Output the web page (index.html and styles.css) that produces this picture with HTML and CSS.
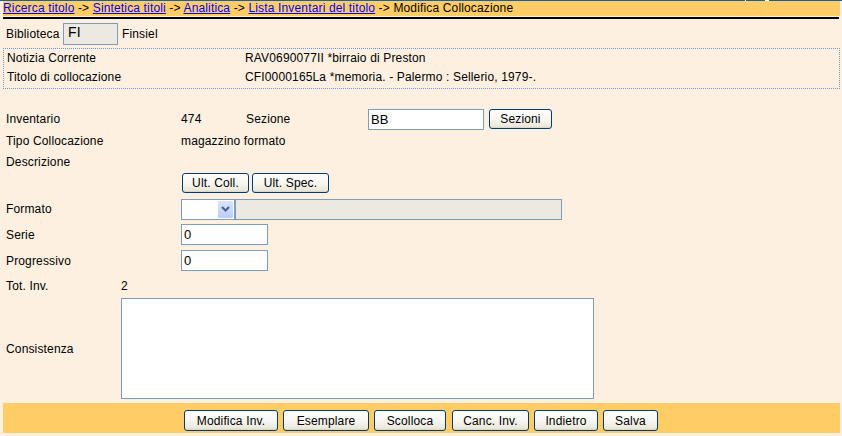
FILE: index.html
```html
<!DOCTYPE html>
<html lang="it">
<head>
<meta charset="utf-8">
<title>Modifica Collocazione</title>
<link rel="stylesheet" href="styles.css">
</head>
<body>
<div class="topline"></div>
<div class="page">
  <div class="crumbs"><a href="#">Ricerca titolo</a> -&gt; <a href="#">Sintetica titoli</a> -&gt; <a href="#">Analitica</a> -&gt; <a href="#">Lista Inventari del titolo</a> -&gt; Modifica Collocazione</div>
  <div class="rule"></div>

  <div class="bib-row">
    <span class="bib-label">Biblioteca</span>
    <span class="field field-grey bib-field">FI</span>
    <span class="bib-name">Finsiel</span>
  </div>

  <div class="infobox">
    <div class="info-row"><span class="info-label">Notizia Corrente</span><span>RAV0690077II *birraio di Preston</span></div>
    <div class="info-row"><span class="info-label">Titolo di collocazione</span><span>CFI0000165La *memoria. - Palermo : Sellerio, 1979-.</span></div>
  </div>

  <div class="form">
    <div class="row row-inv">
      <span class="label">Inventario</span>
      <span class="num">474</span>
      <span class="sez-label">Sezione</span>
      <span class="field sez-field">BB</span>
      <button class="btn btn-sez" type="button">Sezioni</button>
    </div>
    <div class="row row-tipo">
      <span class="label">Tipo Collocazione</span>
      <span>magazzino formato</span>
    </div>
    <div class="row row-desc">
      <span class="label">Descrizione</span>
    </div>
    <div class="row row-ult">
      <span class="label"></span>
      <button class="btn btn-coll" type="button">Ult. Coll.</button>
      <button class="btn btn-spec" type="button">Ult. Spec.</button>
    </div>
    <div class="row row-formato">
      <span class="label">Formato</span>
      <span class="select">
        <span class="select-arrow"><svg width="9" height="6" viewBox="0 0 9 6"><path d="M1 1 L4.5 4.5 L8 1" fill="none" stroke="#4d6185" stroke-width="2"/></svg></span>
      </span>
      <span class="field field-grey formato-field"></span>
    </div>
    <div class="row row-serie">
      <span class="label">Serie</span>
      <span class="field small-field">0</span>
    </div>
    <div class="row row-prog">
      <span class="label">Progressivo</span>
      <span class="field small-field">0</span>
    </div>
    <div class="row row-tot">
      <span class="label label-short">Tot. Inv.</span>
      <span>2</span>
    </div>
    <div class="row row-cons">
      <span class="label label-short">Consistenza</span>
      <span class="field textarea"></span>
    </div>
  </div>

  <div class="footer">
    <button class="btn b-mod" type="button">Modifica Inv.</button>
    <button class="btn b-ese" type="button">Esemplare</button>
    <button class="btn b-sco" type="button">Scolloca</button>
    <button class="btn b-can" type="button">Canc. Inv.</button>
    <button class="btn b-ind" type="button">Indietro</button>
    <button class="btn b-sal" type="button">Salva</button>
  </div>
</div>
</body>
</html>
```

FILE: styles.css
```css
* { box-sizing: border-box; }

html, body {
  margin: 0;
  padding: 0;
}

body {
  width: 842px;
  height: 436px;
  background: #fdf0e0;
  font-family: "Liberation Sans", Arial, sans-serif;
  font-size: 12px;
  letter-spacing: 0.15px;
  color: #000;
  overflow: hidden;
}

.topline {
  height: 1px;
  background: linear-gradient(to right, #1560a8 0, #1560a8 745px, #fff 745px, #fff 746px, #1560a8 746px, #1560a8 765px, #fff 765px, #fff 769px, #1560a8 769px);
}

.page {
  margin-left: 3px;
  width: 837px;
}

.crumbs {
  height: 15px;
  line-height: 15px;
  background: #ffcc66;
  white-space: nowrap;
}

.crumbs a {
  color: #0000ff;
  text-decoration: underline;
}

.rule {
  margin-top: 1px;
  height: 2px;
  background: #000;
  width: 836px;
}

.bib-row {
  margin-top: 4px;
  height: 22px;
  display: flex;
  align-items: center;
}

.bib-label {
  padding-left: 3px;
  width: 60px;
}

.field {
  display: inline-block;
  border: 1px solid #7f9db9;
  background: #fff;
  padding-left: 2px;
}

.field-grey {
  background: #ebe9e2;
}

.bib-field {
  width: 55px;
  height: 22px;
  line-height: 16px;
  padding-left: 4px;
  font-size: 14px;
}

.bib-name {
  margin-left: 4px;
}

.infobox {
  margin-top: 3px;
  border: 1px dotted #6a95d6;
  padding-bottom: 1px;
}

.info-row {
  display: flex;
  height: 19px;
  line-height: 19px;
  padding-left: 3px;
}

.info-label {
  width: 238px;
}

.form {
  margin-top: 19px;
}

.row {
  display: flex;
  align-items: center;
}

.label {
  width: 178px;
  padding-left: 3px;
  flex: none;
}

.label-short {
  width: 118px;
}

.row-inv { height: 22px; }
.num { width: 65px; }
.sez-label { width: 122px; }

.sez-field {
  width: 116px;
  height: 21px;
  line-height: 19px;
  font-size: 13px;
}

.btn {
  height: 20px;
  padding: 0;
  border: 1px solid #003c74;
  border-radius: 3px;
  background: linear-gradient(#ffffff 0%, #f7f6f1 50%, #ebe8dc 90%, #d6d0c5 100%);
  font-family: "Liberation Sans", Arial, sans-serif;
  font-size: 12px;
  letter-spacing: 0.15px;
  color: #000;
  line-height: 18px;
  margin: 0;
  flex: none;
}

.btn-sez {
  margin-left: 5px;
  width: 63px;
}

.row-tipo { height: 22px; }
.row-desc { height: 19px; }

.row-ult {
  margin-top: 2px;
  height: 20px;
  gap: 3px;
}

.row-ult .label { width: 176px; }
.btn-coll { width: 67px; }
.btn-spec { width: 77px; }

.row-formato {
  margin-top: 5px;
  height: 22px;
}

.select {
  position: relative;
  width: 54px;
  height: 21px;
  border: 1px solid #7f9db9;
  background: #fff;
  flex: none;
}

.select-arrow {
  position: absolute;
  right: 1px;
  top: 1px;
  width: 15px;
  height: 17px;
  border-radius: 1px;
  background: linear-gradient(#d9e5fd, #b9cdf7);
  display: flex;
  align-items: center;
  justify-content: center;
}

.formato-field {
  width: 327px;
  height: 21px;
}

.small-field {
  width: 87px;
  height: 21px;
  line-height: 19px;
  font-size: 13px;
}

.row-serie { margin-top: 4px; height: 21px; }
.row-prog { margin-top: 5px; height: 21px; }
.row-tot { margin-top: 5px; height: 20px; }

.row-cons {
  margin-top: 2px;
}

.textarea {
  width: 473px;
  height: 101px;
}

.footer {
  margin-top: 4px;
  height: 30px;
  background: #ffcc66;
  display: flex;
  align-items: flex-start;
  padding-top: 7px;
  padding-left: 181px;
}

.footer .btn {
  height: 21px;
  margin-right: 5px;
}

.b-mod { width: 94px; }
.b-ese { width: 86px; }
.b-sco { width: 72px; margin-right: 6px !important; }
.b-can { width: 77px; }
.b-ind { width: 64px; }
.b-sal { width: 55px; }
```
